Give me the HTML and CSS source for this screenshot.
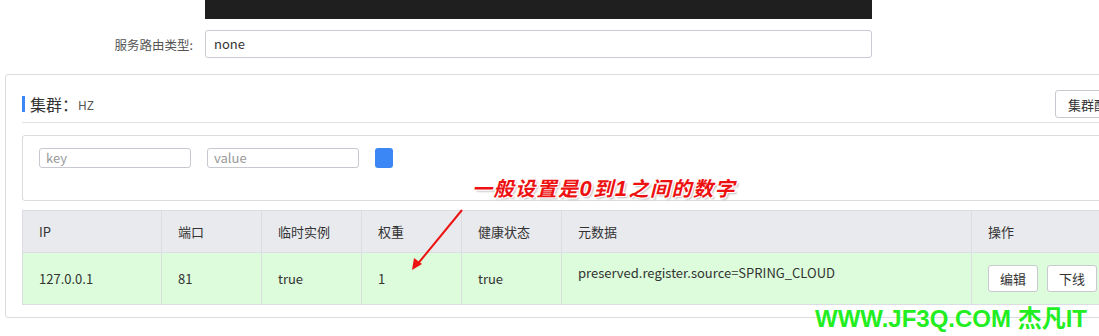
FILE: index.html
```html
<!DOCTYPE html>
<html lang="zh-CN">
<head>
    <meta charset="UTF-8">
    <meta name="viewport" content="width=device-width, initial-scale=1.0">
    <title>服务详情</title>
    <link rel="stylesheet" href="styles.css">
</head>
<body>
    <div class="page">
        <div class="form-row">
            <span></span>
            <div class="code-box"></div>
        </div>
        <div class="form-row route-row">
            <label class="form-label">服务路由类型:</label>
            <div class="text-input">none</div>
        </div>

        <div class="card">
            <div class="card-head">
                <div class="card-title">
                    <span class="title-main">集群：</span>
                    <span class="title-sub">HZ</span>
                </div>
                <button class="btn btn-cluster">集群配置</button>
            </div>

            <div class="filter-box">
                <div class="filter-input">key</div>
                <div class="filter-input">value</div>
                <button class="btn-blue"></button>
            </div>

            <table class="inst-table">
                <colgroup>
                    <col style="width:139px">
                    <col style="width:100px">
                    <col style="width:100px">
                    <col style="width:100px">
                    <col style="width:100px">
                    <col style="width:410px">
                    <col style="width:200px">
                </colgroup>
                <thead>
                    <tr>
                        <th>IP</th>
                        <th>端口</th>
                        <th>临时实例</th>
                        <th>权重</th>
                        <th>健康状态</th>
                        <th>元数据</th>
                        <th>操作</th>
                    </tr>
                </thead>
                <tbody>
                    <tr>
                        <td>127.0.0.1</td>
                        <td>81</td>
                        <td>true</td>
                        <td>1</td>
                        <td>true</td>
                        <td class="meta-cell">preserved.register.source=SPRING_CLOUD</td>
                        <td class="ops-cell">
                            <button class="btn">编辑</button>
                            <button class="btn">下线</button>
                        </td>
                    </tr>
                </tbody>
            </table>
        </div>

        <!-- 截图上的标注 -->
        <div class="note">一般设置是<b>0</b>到<b>1</b>之间的数字</div>
        <svg class="note-arrow" width="60" height="64" viewBox="0 0 60 64">
            <line x1="52" y1="2" x2="6" y2="58" stroke="#ee1111" stroke-width="2"/>
            <polygon points="2,62 4,50 12,56" fill="#ee1111"/>
        </svg>
        <div class="watermark">WWW.JF3Q.COM 杰凡IT</div>
    </div>
</body>
</html>
```

FILE: styles.css
```css
body {
    margin: 0;
    padding: 0;
    background-color: #fff;
    font-family: "Noto Sans CJK SC", "Noto Sans", sans-serif;
    font-size: 13px;
    color: #333;
    overflow: hidden;
}
.page {
    position: relative;
    width: 1099px;
    height: 336px;
    overflow: hidden;
}
.form-row {
    display: grid;
    grid-template-columns: 193px 667px;
    column-gap: 12px;
    align-items: center;
}
.code-box {
    height: 19px;
    background-color: #1f1f1f;
}
.route-row {
    margin-top: 11px;
}
.form-label {
    text-align: right;
    color: #555;
    font-size: 12.5px;
}
.text-input {
    height: 26px;
    line-height: 26px;
    border: 1px solid #c9c9d1;
    border-radius: 3px;
    padding-left: 8px;
    color: #333;
}
.card {
    margin: 16px 0 0 5px;
    width: 1200px;
    border: 1px solid #dcdcdf;
    border-radius: 3px;
    padding: 0 16px 12px 16px;
}
.card-head {
    display: flex;
    align-items: center;
    justify-content: space-between;
    width: 1111px;
    padding: 15px 0 4px 0;
    border-bottom: 1px solid #e2e2e4;
}
.card-title {
    display: flex;
    align-items: center;
    height: 16px;
    border-left: 3px solid #3b87f5;
    padding-left: 5px;
}
.title-main {
    font-size: 16px;
    line-height: 16px;
    color: #333;
}
.title-sub {
    font-size: 12px;
    color: #555;
}
.btn {
    font-family: inherit;
    font-size: 13px;
    color: #333;
    background-color: #fff;
    border: 1px solid #c8c8d0;
    border-radius: 3px;
    height: 28px;
    padding: 0 12px;
    cursor: pointer;
}
.filter-box {
    display: flex;
    align-items: flex-start;
    gap: 16px;
    margin-top: 12px;
    height: 52px;
    padding: 12px 16px 0 16px;
    border: 1px solid #dcdcdf;
    border-radius: 3px;
}
.filter-input {
    width: 144px;
    height: 18px;
    line-height: 18px;
    padding-left: 6px;
    border: 1px solid #c8c8d0;
    border-radius: 3px;
    color: #999;
    font-size: 13px;
}
.btn-blue {
    width: 18px;
    height: 20px;
    border: none;
    border-radius: 3px;
    background-color: #3b87f5;
}
.inst-table {
    margin-top: 9px;
    border-collapse: collapse;
    table-layout: fixed;
    width: 1149px;
}
.inst-table th,
.inst-table td {
    border: 1px solid #dcdde2;
    text-align: left;
    padding: 0 0 0 16px;
    font-weight: normal;
    color: #333;
}
.inst-table th {
    height: 40px;
    padding-bottom: 1px;
    background-color: #e9eaee;
}
.inst-table td {
    height: 51px;
    background-color: #dcfcdb;
}
.inst-table td.meta-cell {
    vertical-align: top;
    height: 41px;
    padding-top: 10px;
}
.ops-cell .btn {
    height: 27px;
    width: 50px;
    padding: 0;
    margin-right: 6px;
}
.note {
    position: absolute;
    left: 472px;
    top: 173px;
    font-size: 20px;
    font-weight: bold;
    font-style: italic;
    letter-spacing: 1.5px;
    color: #ee1111;
    text-shadow: 1px 1px 0 #fff, -1px -1px 0 #fff, 1px -1px 0 #fff, -1px 1px 0 #fff, 2px 2px 2px #bbb;
}
.note b {
    font-family: "Liberation Sans", Arial, sans-serif;
    font-size: 22px;
}
.note-arrow {
    position: absolute;
    left: 410px;
    top: 208px;
}
.watermark {
    position: absolute;
    left: 815px;
    top: 299px;
    font-family: "Liberation Sans", "Noto Sans CJK SC", sans-serif;
    font-size: 24px;
    font-weight: bold;
    color: #22ee22;
    white-space: nowrap;
}
```
